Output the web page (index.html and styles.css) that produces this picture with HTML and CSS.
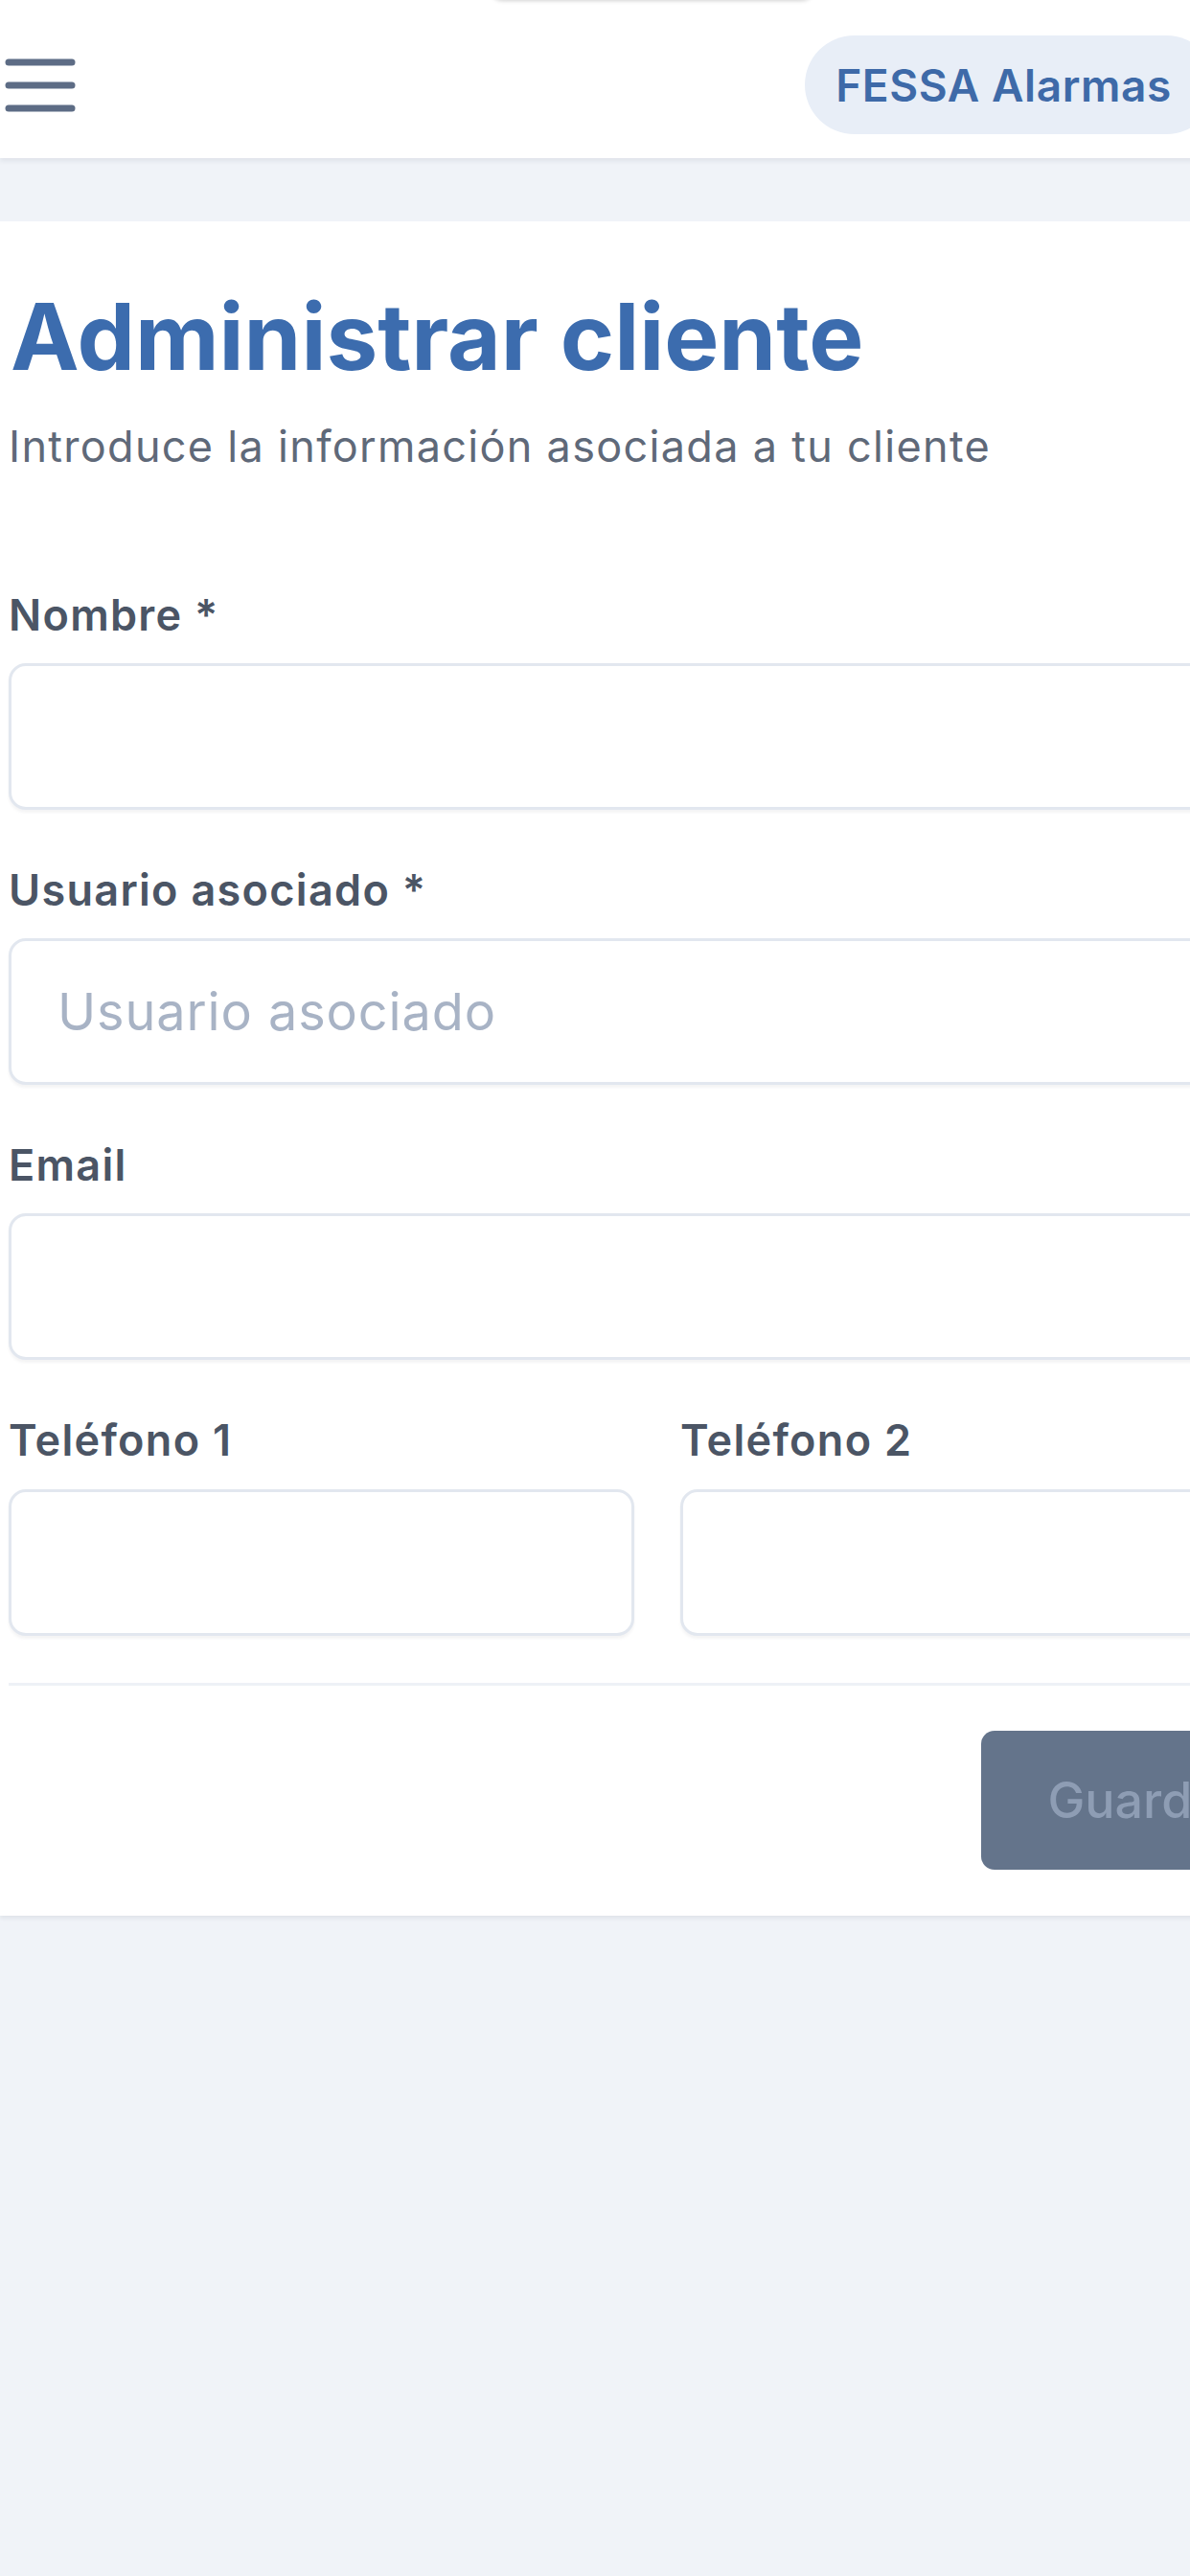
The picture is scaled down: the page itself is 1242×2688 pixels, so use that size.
FILE: index.html
```html
<!DOCTYPE html>
<html lang="es">
  <head>
    <meta charset="utf-8" />
    <title>Administrar cliente - FESSA Alarmas</title>
    <link rel="stylesheet" href="styles.css">
  </head>

  <body>
    <div class="island"></div>
    <div class="page">
      <!-- Top bar: menu + company badge -->
      <header class="topbar">
        <button class="menu-btn" type="button" aria-label="Menú">
          <svg width="74" height="56" viewBox="0 0 74 56">
            <g stroke="#5d6c85" stroke-width="7" stroke-linecap="round">
              <line x1="4" y1="4" x2="70" y2="4" />
              <line x1="4" y1="28" x2="70" y2="28" />
              <line x1="4" y1="52" x2="70" y2="52" />
            </g>
          </svg>
        </button>
        <span class="brand">FESSA Alarmas</span>
      </header>

      <main class="content">
        <section class="card">
          <h1>Administrar cliente</h1>
          <p class="lead">Introduce la información asociada a tu cliente</p>

          <form class="client-form">
            <div class="field">
              <label for="nombre">Nombre *</label>
              <input id="nombre" type="text" />
            </div>
            <div class="field">
              <label for="usuario">Usuario asociado *</label>
              <input id="usuario" type="text" placeholder="Usuario asociado" />
            </div>
            <div class="field">
              <label for="email">Email</label>
              <input id="email" type="email" />
            </div>
            <div class="field field-row">
              <div>
                <label for="tel1">Teléfono 1</label>
                <input id="tel1" type="tel" />
              </div>
              <div>
                <label for="tel2">Teléfono 2</label>
                <input id="tel2" type="tel" />
              </div>
            </div>

            <hr class="divider" />

            <div class="actions">
              <button class="btn-save" type="submit" disabled>Guardar</button>
            </div>
          </form>
        </section>
      </main>
    </div>
  </body>
</html>
```

FILE: styles.css
```css
/* Base page */
html, body {
  margin: 0;
  overflow-x: hidden;
}

body {
  background-color: #f0f3f8;
  font-family: Inter, "Noto Sans", Arial, sans-serif;
  min-height: 2688px;
  position: relative;
}

/* Small shape peeking in at the top centre */
.island {
  position: absolute;
  top: -20px;
  left: 508px;
  width: 345px;
  height: 20px;
  background: #ffffff;
  border-radius: 0 0 18px 18px;
  box-shadow: 0 1px 4px rgba(0, 0, 0, 0.18);
  z-index: 5;
}

.page {
  width: 1372px;
}

/* Top bar */
.topbar {
  display: flex;
  justify-content: space-between;
  align-items: center;
  box-sizing: border-box;
  height: 165px;
  padding: 12px 103px 0 5px;
  background-color: #ffffff;
  box-shadow: 0 3px 5px rgba(30, 41, 59, 0.08);
  position: relative;
  z-index: 2;
}

.menu-btn {
  border: none;
  background: none;
  padding: 0;
  display: flex;
  cursor: pointer;
}

.brand {
  display: flex;
  align-items: center;
  height: 103px;
  padding: 0 46px 0 32px;
  border-radius: 52px;
  background-color: #e8eef7;
  color: #3e6aa8;
  font-size: 46px;
  font-weight: 600;
  letter-spacing: 0.6px;
}

/* Form card */
.content {
  padding-top: 66px;
}

.card {
  background-color: #ffffff;
  padding: 63px 9px 48px 9px;
  box-shadow: 0 3px 4px rgba(30, 41, 59, 0.07);
}

h1 {
  margin: 0 0 28px 0;
  padding-left: 2px;
  font-size: 96px;
  line-height: 1.2;
  font-weight: 700;
  letter-spacing: 0;
  color: #3c6cae;
}

.lead {
  margin: 0;
  font-size: 45px;
  line-height: 1.3;
  letter-spacing: 1.3px;
  color: #5f6979;
}

.client-form {
  margin-top: 118px;
}

.field + .field {
  margin-top: 56px;
}

.field label {
  display: block;
  margin-bottom: 22px;
  font-size: 45px;
  line-height: 1.25;
  font-weight: 600;
  letter-spacing: 1.3px;
  color: #4b5565;
}

.field input {
  display: block;
  box-sizing: border-box;
  width: 100%;
  height: 153px;
  padding: 0 48px;
  border: 3px solid #e2e7ef;
  border-radius: 18px;
  background-color: #ffffff;
  box-shadow: 0 3px 3px rgba(30, 41, 59, 0.05);
  font-family: inherit;
  font-size: 54px;
  letter-spacing: 0.9px;
  color: #334155;
}

.field input::placeholder {
  color: #a8b3c5;
}

.field-row {
  display: grid;
  grid-template-columns: 1fr 1fr;
  column-gap: 48px;
}

.divider {
  margin: 49px 0 0 0;
  height: 3px;
  border: none;
  background-color: #eef1f6;
}

.actions {
  display: flex;
  justify-content: flex-end;
  margin-top: 47px;
}

.btn-save {
  height: 145px;
  padding: 0 69px;
  border: none;
  border-radius: 14px;
  background-color: #64748b;
  color: #8e9db4;
  font-family: inherit;
  font-size: 52px;
  font-weight: 500;
}
```
